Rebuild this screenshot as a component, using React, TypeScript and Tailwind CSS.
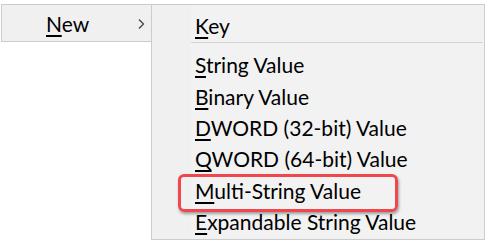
import React from "react";

const Item = ({ k, rest, h = "h-[31.4px]" }: { k: string; rest: string; h?: string }) => (
  <div className={`${h} flex items-center pl-[43px]`}>
    <span>
      <span className="underline decoration-[1.5px] underline-offset-[3px]">{k}</span>
      {rest}
    </span>
  </div>
);

export default function App() {
  return (
    <div
      className="w-[487px] h-[242px] bg-white relative overflow-hidden text-black text-[21px] leading-none"
      style={{ fontFamily: '"Segoe UI", Lato, "Noto Sans", sans-serif' }}
    >
      <div className="flex pt-[4px] pl-[1px]">
        {/* parent menu */}
        <div className="w-[150px] h-[38px] border-l border-t border-b border-[#cccccc] bg-[#f0f0f0] flex items-center relative">
          <span className="ml-[44px]">
            <span className="underline decoration-[1.5px] underline-offset-[3px]">N</span>ew
          </span>
          <svg className="absolute left-[135px] top-[13px]" width="9" height="12" viewBox="0 0 9 12">
            <path d="M2 1.5 L6.5 6 L2 10.5" fill="none" stroke="#444" strokeWidth="1.3" />
          </svg>
        </div>
        {/* submenu */}
        <div className="w-[334px] h-[236px] border border-[#cccccc] bg-[#f2f2f2] relative flex">
          <div className="w-[39px] bg-[#f0f0f0] shrink-0" />
          <div className="flex-1 -ml-[39px]">
            <div className="h-[37px] pt-[3px] flex items-center pl-[43px]">
              <span>
                <span className="underline decoration-[1.5px] underline-offset-[3px]">K</span>ey
              </span>
            </div>
            <div className="ml-[39px] mr-[1px] h-px bg-[#d4d4d4]" />
            <div className="pt-[6px]">
              <Item k="S" rest="tring Value" />
              <Item k="B" rest="inary Value" />
              <Item k="D" rest="WORD (32-bit) Value" />
              <Item k="Q" rest="WORD (64-bit) Value" />
              <Item k="M" rest="ulti-String Value" />
              <Item k="E" rest="xpandable String Value" />
            </div>
          </div>
          <div className="absolute left-[26px] top-[169px] w-[220px] h-[38px] border-[3px] border-[#f0464d] rounded-[6px] shadow-[1px_2px_3px_rgba(0,0,0,0.35)]" />
        </div>
      </div>
    </div>
  );
}
